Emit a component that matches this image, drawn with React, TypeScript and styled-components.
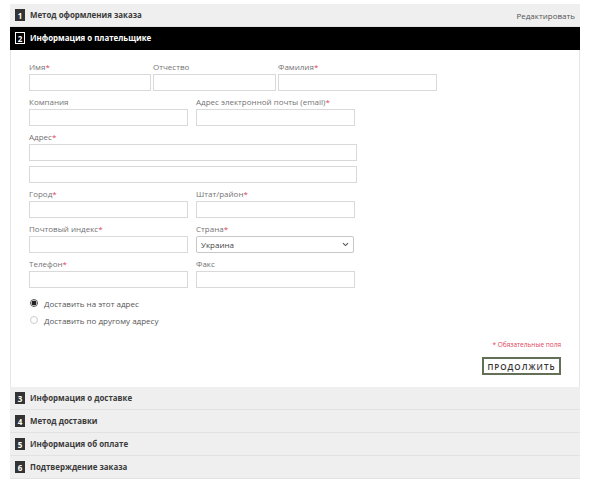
import styled, { createGlobalStyle } from "styled-components";

const GlobalStyle = createGlobalStyle`
  body {
    margin: 0;
    background: #fff;
    font-family: "Open Sans", "Liberation Sans", sans-serif;
  }
`;

const Checkout = styled.div`
  margin: 4px 17px 0 10px;
  width: 570px;
  display: flex;
  flex-direction: column;
`;

const StepHeader = styled.div<{ $active?: boolean }>`
  height: 22px;
  display: flex;
  align-items: center;
  padding: 0 5px;
  background: ${(p) => (p.$active ? "#000" : "#efefef")};
  border-bottom: 1px solid ${(p) => (p.$active ? "#000" : "#e2e2e2")};
  color: ${(p) => (p.$active ? "#fff" : "#3a3a3a")};
`;

const Badge = styled.span<{ $active?: boolean }>`
  width: ${(p) => (p.$active ? "8px" : "10px")};
  height: ${(p) => (p.$active ? "10px" : "12px")};
  display: flex;
  align-items: center;
  justify-content: center;
  background: ${(p) => (p.$active ? "#000" : "#333")};
  border: ${(p) => (p.$active ? "1px solid #fff" : "none")};
  color: #fff;
  font-size: 8px;
  font-weight: 700;
  margin-right: 5px;
`;

const StepTitle = styled.span`
  font-size: 7.9px;
  font-weight: 700;
  flex: 1;
`;

const EditLink = styled.a`
  font-size: 8px;
  color: #555;
  text-decoration: none;
`;

const Body = styled.div`
  border-left: 1px solid #e6e6e6;
  border-right: 1px solid #e6e6e6;
  padding: 12px 18px 12px 18px;
  display: flex;
  flex-direction: column;
`;

const Row = styled.div<{ $gap?: number }>`
  display: flex;
  gap: ${(p) => p.$gap ?? 8}px;
  margin-bottom: 6px;
`;

const Field = styled.div<{ $w: number }>`
  width: ${(p) => p.$w}px;
  display: flex;
  flex-direction: column;
`;

const Label = styled.label`
  font-size: 8px;
  line-height: 9px;
  margin-bottom: 3px;
  color: #737373;
`;

const Req = styled.span`
  color: #e0455a;
`;

const TextInput = styled.input`
  display: block;
  box-sizing: border-box;
  height: 17px;
  width: 100%;
  border: 1px solid #d9d9d9;
  margin: 0;
  padding: 0 4px;
  font: inherit;
  font-size: 8px;
  & + & {
    margin-top: 5px;
  }
`;

const SelectWrap = styled.div`
  position: relative;
  height: 17px;
`;

const Select = styled.select`
  display: block;
  box-sizing: border-box;
  appearance: none;
  height: 17px;
  width: 100%;
  margin: 0;
  border: 1px solid #c8c8c8;
  border-radius: 2px;
  background: #fff;
  padding: 0 4px;
  font-family: inherit;
  font-size: 8px;
  color: #444;
`;

const Chevron = styled.svg`
  position: absolute;
  right: 5px;
  top: 6px;
  pointer-events: none;
`;

const Radios = styled.div`
  margin-top: 3px;
  display: flex;
  flex-direction: column;
  gap: 5px;
`;

const RadioRow = styled.label`
  display: flex;
  align-items: center;
  height: 12px;
  font-size: 8px;
  color: #555;
  padding-left: 1px;
`;

const RadioDot = styled.span<{ $checked?: boolean }>`
  box-sizing: border-box;
  width: 8px;
  height: 8px;
  border-radius: 50%;
  margin-right: 6px;
  border: 1px solid ${(p) => (p.$checked ? "#555" : "#ccc")};
  background: ${(p) => (p.$checked ? "radial-gradient(circle, #222 0 2.4px, #fff 2.6px)" : "#fff")};
`;

const Footer = styled.div`
  margin-top: 14px;
  display: flex;
  flex-direction: column;
  align-items: flex-end;
`;

const RequiredNote = styled.span`
  font-size: 6.5px;
  color: #e0455a;
  line-height: 10px;
`;

const ContinueButton = styled.button`
  margin-top: 7px;
  box-sizing: border-box;
  width: 79px;
  height: 18px;
  border: 2px solid #637057;
  background: #fff;
  color: #333;
  font-family: inherit;
  font-size: 8px;
  font-weight: 600;
  letter-spacing: 1px;
  padding: 0;
  cursor: pointer;
`;

const steps = [
  { n: 3, title: "Информация о доставке" },
  { n: 4, title: "Метод доставки" },
  { n: 5, title: "Информация об оплате" },
  { n: 6, title: "Подтверждение заказа" },
];

const Star = () => <Req>*</Req>;

export default function App() {
  return (
    <>
      <GlobalStyle />
      <Checkout>
        <StepHeader>
          <Badge>1</Badge>
          <StepTitle>Метод оформления заказа</StepTitle>
          <EditLink href="#">Редактировать</EditLink>
        </StepHeader>
        <StepHeader $active>
          <Badge $active>2</Badge>
          <StepTitle>Информация о плательщике</StepTitle>
        </StepHeader>
        <Body>
          <Row $gap={2}>
            <Field $w={122}>
              <Label>
                Имя<Star />
              </Label>
              <TextInput />
            </Field>
            <Field $w={123}>
              <Label>Отчество</Label>
              <TextInput />
            </Field>
            <Field $w={159}>
              <Label>
                Фамилия<Star />
              </Label>
              <TextInput />
            </Field>
          </Row>
          <Row>
            <Field $w={159}>
              <Label>Компания</Label>
              <TextInput />
            </Field>
            <Field $w={159}>
              <Label>
                Адрес электронной почты (email)<Star />
              </Label>
              <TextInput />
            </Field>
          </Row>
          <Row>
            <Field $w={328}>
              <Label>
                Адрес<Star />
              </Label>
              <TextInput />
              <TextInput />
            </Field>
          </Row>
          <Row>
            <Field $w={159}>
              <Label>
                Город<Star />
              </Label>
              <TextInput />
            </Field>
            <Field $w={159}>
              <Label>
                Штат/район<Star />
              </Label>
              <TextInput />
            </Field>
          </Row>
          <Row>
            <Field $w={159}>
              <Label>
                Почтовый индекс<Star />
              </Label>
              <TextInput />
            </Field>
            <Field $w={158}>
              <Label>
                Страна<Star />
              </Label>
              <SelectWrap>
                <Select defaultValue="ua">
                  <option value="ua">Украина</option>
                </Select>
                <Chevron width="7" height="5" viewBox="0 0 7 5">
                  <path d="M1 1.2 L3.5 3.6 L6 1.2" fill="none" stroke="#555" strokeWidth="1.1" />
                </Chevron>
              </SelectWrap>
            </Field>
          </Row>
          <Row>
            <Field $w={159}>
              <Label>
                Телефон<Star />
              </Label>
              <TextInput />
            </Field>
            <Field $w={159}>
              <Label>Факс</Label>
              <TextInput />
            </Field>
          </Row>
          <Radios>
            <RadioRow>
              <RadioDot $checked />
              Доставить на этот адрес
            </RadioRow>
            <RadioRow>
              <RadioDot />
              Доставить по другому адресу
            </RadioRow>
          </Radios>
          <Footer>
            <RequiredNote>* Обязательные поля</RequiredNote>
            <ContinueButton>ПРОДОЛЖИТЬ</ContinueButton>
          </Footer>
        </Body>
        {steps.map((s) => (
          <StepHeader key={s.n}>
            <Badge>{s.n}</Badge>
            <StepTitle>{s.title}</StepTitle>
          </StepHeader>
        ))}
      </Checkout>
    </>
  );
}
